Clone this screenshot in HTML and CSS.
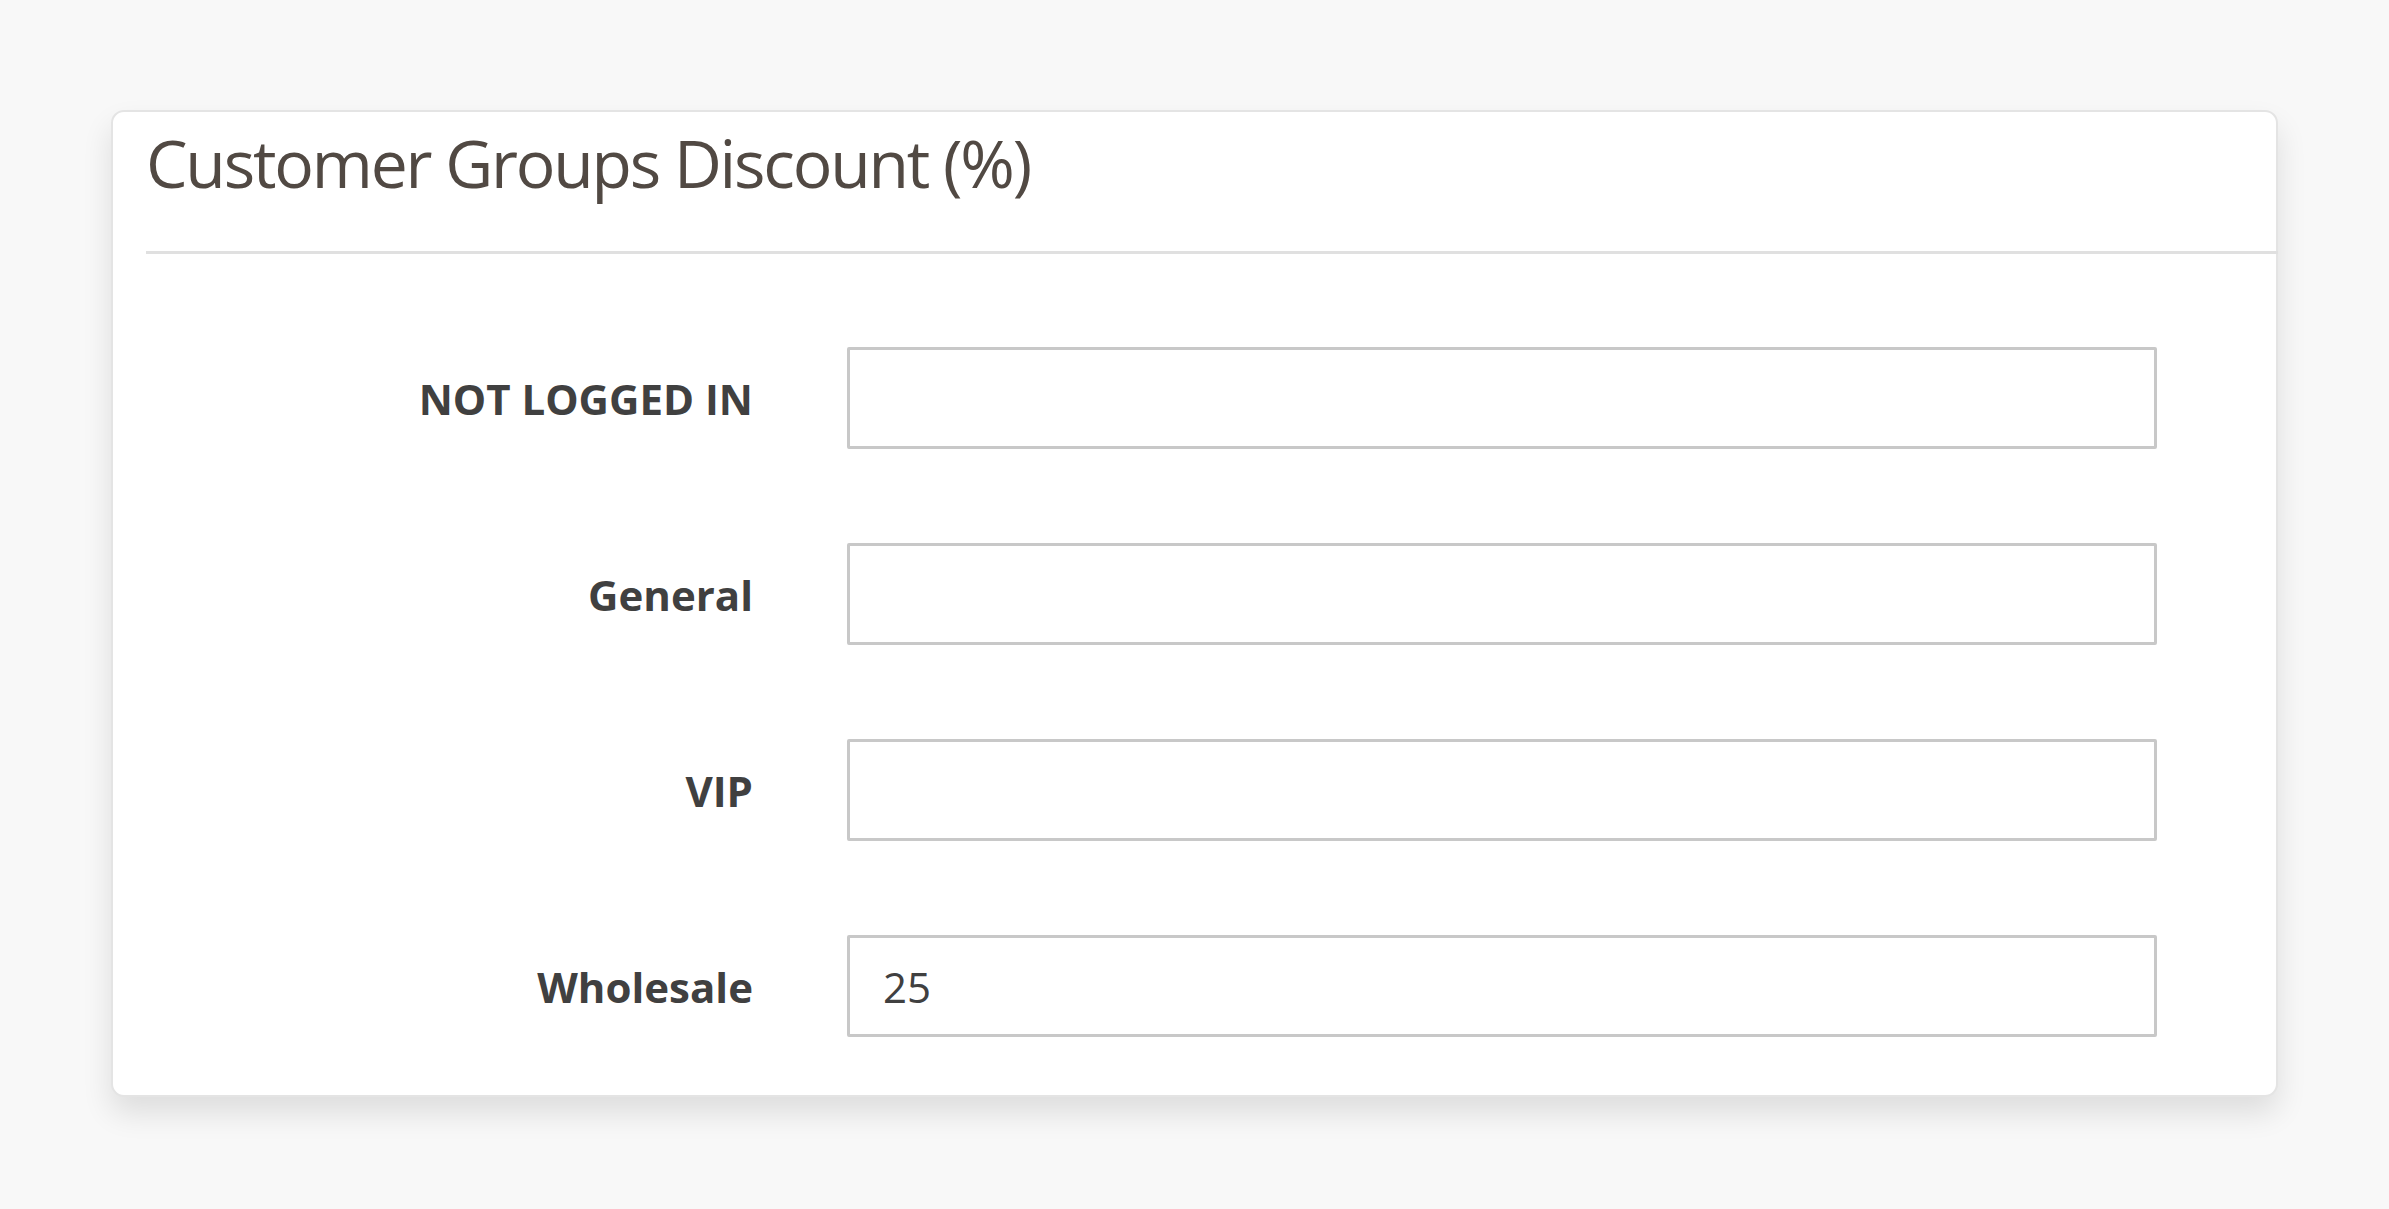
FILE: index.html
```html
<!DOCTYPE html>
<html lang="en">
<head>
<meta charset="utf-8">
<title>Customer Groups Discount</title>
<link rel="stylesheet" href="styles.css">
</head>
<body>
<div class="page">
  <section class="card">
    <div class="card-head">
      <h2 class="title">Customer Groups Discount (%)</h2>
    </div>
    <div class="form">
      <div class="row">
        <label class="label" for="g0">NOT LOGGED IN</label>
        <input class="field" id="g0" type="text" value="">
      </div>
      <div class="row">
        <label class="label" for="g1">General</label>
        <input class="field" id="g1" type="text" value="">
      </div>
      <div class="row">
        <label class="label" for="g2">VIP</label>
        <input class="field" id="g2" type="text" value="">
      </div>
      <div class="row">
        <label class="label" for="g3">Wholesale</label>
        <input class="field" id="g3" type="text" value="25">
      </div>
    </div>
  </section>
</div>
</body>
</html>
```

FILE: styles.css
```css
html, body {
  margin: 0;
  padding: 0;
  background: #f8f8f8;
  font-family: "Open Sans", "Noto Sans", "Liberation Sans", sans-serif;
}

.page {
  padding: 110px 0 60px 111px;
  width: 2167px;
}

.card {
  box-sizing: border-box;
  width: 2167px;
  height: 987px;
  background: #ffffff;
  border: 2px solid #e4e4e4;
  border-radius: 13px;
  box-shadow: 0 16px 30px rgba(0, 0, 0, 0.11);
  padding: 0 0 0 33px;
}

.card-head {
  padding-top: 5px;
  padding-bottom: 44px;
  border-bottom: 3px solid #e0e0e0;
  margin-right: -2px;
}

.title {
  margin: 0;
  font-size: 66px;
  line-height: 90px;
  font-weight: 400;
  letter-spacing: -2.2px;
  color: #514943;
}

.form {
  display: flex;
  flex-direction: column;
  gap: 94px;
  padding-top: 93px;
}

.row {
  display: grid;
  grid-template-columns: 607px 1310px;
  column-gap: 94px;
  align-items: center;
}

.label {
  text-align: right;
  font-size: 42px;
  font-weight: 700;
  color: #404040;
}

.field {
  box-sizing: border-box;
  width: 1310px;
  height: 102px;
  margin: 0;
  border: 3px solid #c8c8c8;
  border-radius: 2px;
  background: #ffffff;
  padding: 0 33px;
  font-family: "Open Sans", "Noto Sans", "Liberation Sans", sans-serif;
  font-size: 42px;
  color: #404040;
  outline: none;
}
```
